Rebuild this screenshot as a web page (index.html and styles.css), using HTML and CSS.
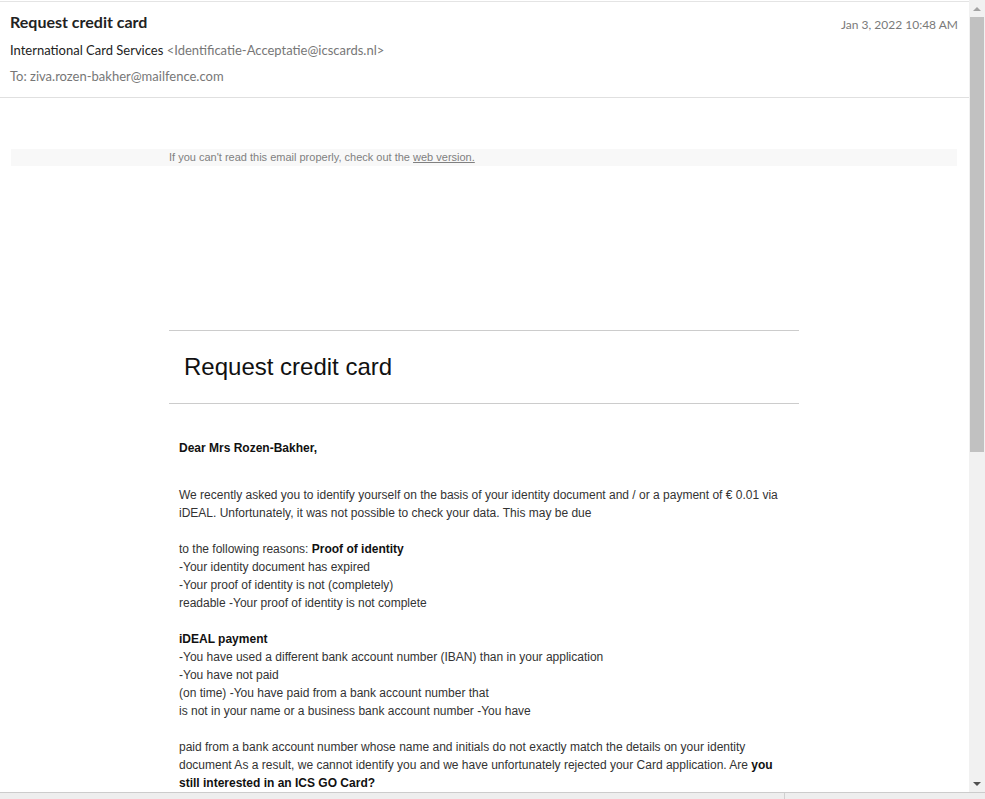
FILE: index.html
```html
<!DOCTYPE html>
<html lang="en">

<head>
    <meta charset="UTF-8">
    <meta name="viewport" content="width=device-width, initial-scale=1.0">
    <title>Request credit card</title>
    <link rel="stylesheet" href="styles.css">
</head>

<body>
    <div class="viewer">
        <div class="pane">
            <div class="message">
                <div class="msg-header">
                    <div class="header-top">
                        <h1 class="subject">Request credit card</h1>
                        <span class="date">Jan 3, 2022 10:48 AM</span>
                    </div>
                    <div class="from">International Card Services <span class="address">&lt;Identificatie-Acceptatie@icscards.nl&gt;</span></div>
                    <div class="to">To: ziva.rozen-bakher@mailfence.com</div>
                </div>

                <div class="msg-body">
                    <div class="preheader">
                        <div class="column">
                            If you can't read this email properly, check out the <a href="#">web version.</a>
                        </div>
                    </div>

                    <div class="column">
                        <div class="logo-space"></div>
                        <div class="title-block">
                            <h2>Request credit card</h2>
                        </div>
                        <div class="mail-text">
                            <p class="greeting">Dear Mrs Rozen-Bakher,</p>
                            <p>
                                We recently asked you to identify yourself on the basis of your identity document and / or a payment of &euro; 0.01 via iDEAL. Unfortunately, it was not possible to check your data. This may be due<br>
                                <br>
                                to the following reasons: <b>Proof of identity</b><br>
                                -Your identity document has expired<br>
                                -Your proof of identity is not (completely)<br>
                                readable -Your proof of identity is not complete<br>
                                <br>
                                <b>iDEAL payment</b><br>
                                -You have used a different bank account number (IBAN) than in your application<br>
                                -You have not paid<br>
                                (on time) -You have paid from a bank account number that<br>
                                is not in your name or a business bank account number -You have<br>
                                <br>
                                paid from a bank account number whose name and initials do not exactly match the details on your identity document As a result, we cannot identify you and we have unfortunately rejected your Card application. Are <b>you still interested in an ICS GO Card?</b>
                            </p>
                        </div>
                    </div>
                </div>
            </div>

            <div class="scrollbar">
                <div class="arrow up"></div>
                <div class="thumb"></div>
                <div class="track"></div>
                <div class="arrow down"></div>
            </div>
        </div>

        <div class="statusbar">
            <div class="status-left"></div>
            <div class="status-right">0.45</div>
        </div>
    </div>
</body>

</html>
```

FILE: styles.css
```css
body {
    margin: 0;
    background-color: #ffffff;
    font-family: Lato, "Open Sans", sans-serif;
    color: #333333;
}

.viewer {
    display: flex;
    flex-direction: column;
    height: 100vh;
    overflow: hidden;
}

.pane {
    display: flex;
    height: 792px;
    flex-shrink: 0;
    overflow: hidden;
}

.message {
    flex: 1;
    overflow: hidden;
    border-top: 1px solid #e4e4e4;
    margin-top: 1px;
}

/* header of the message */

.msg-header {
    padding: 10px 11px 12px 10px;
    border-bottom: 1px solid #e0e0e0;
}

.header-top {
    display: flex;
    justify-content: space-between;
    align-items: flex-start;
}

.subject {
    margin: 0;
    font-size: 16px;
    line-height: 20px;
    font-weight: bold;
    color: #222222;
}

.date {
    margin-top: 5px;
    font-size: 12px;
    line-height: 16px;
    color: #7a7a7a;
}

.from,
.to {
    margin-top: 8px;
    font-size: 13px;
    line-height: 18px;
}

.from {
    color: #222222;
}

.from .address,
.to {
    color: #777777;
}

/* body of the message */

.msg-body {
    padding: 51px 12px 0 11px;
    font-family: "Liberation Sans", Arial, sans-serif;
}

.column {
    width: 630px;
    margin: 0 auto;
}

.preheader {
    background-color: #f8f8f8;
    height: 17px;
    font-size: 11px;
    line-height: 17px;
    color: #808080;
}

.preheader a {
    color: #808080;
    text-decoration: underline;
}

.logo-space {
    height: 164px;
    border-bottom: 1px solid #cccccc;
}

.title-block {
    padding: 22px 15px 22px 15px;
    border-bottom: 1px solid #cccccc;
}

.title-block h2 {
    margin: 0;
    font-size: 24px;
    line-height: 28px;
    font-weight: normal;
    color: #111111;
}

.mail-text {
    padding: 35px 10px 20px 10px;
    font-size: 12px;
    line-height: 18px;
    color: #333333;
}

.mail-text p {
    margin: 0;
}

.mail-text .greeting {
    font-weight: bold;
    color: #111111;
    margin-bottom: 29px;
}

.mail-text b {
    color: #111111;
}

/* fake scrollbar on the right */

.scrollbar {
    width: 16px;
    flex-shrink: 0;
    display: flex;
    flex-direction: column;
    background-color: #f1f1f1;
}

.scrollbar .arrow {
    height: 17px;
    display: flex;
    justify-content: center;
    align-items: center;
}

.scrollbar .arrow::before {
    content: '';
    border-left: 4px solid transparent;
    border-right: 4px solid transparent;
}

.scrollbar .up::before {
    border-bottom: 4px solid #a3a3a3;
}

.scrollbar .down::before {
    border-top: 4px solid #505050;
}

.scrollbar .thumb {
    height: 435px;
    margin: 0 1px;
    background-color: #c1c1c1;
}

.scrollbar .track {
    flex: 1;
}

/* bottom bar */

.statusbar {
    flex: 1;
    display: flex;
    border-top: 1px solid #cccccc;
    background-color: #eeeeee;
    overflow: hidden;
}

.status-left {
    width: 784px;
    border-right: 1px solid #d0d0d0;
}

.status-right {
    padding: 3px 0 0 10px;
    font-size: 12px;
    color: #666666;
}
```
